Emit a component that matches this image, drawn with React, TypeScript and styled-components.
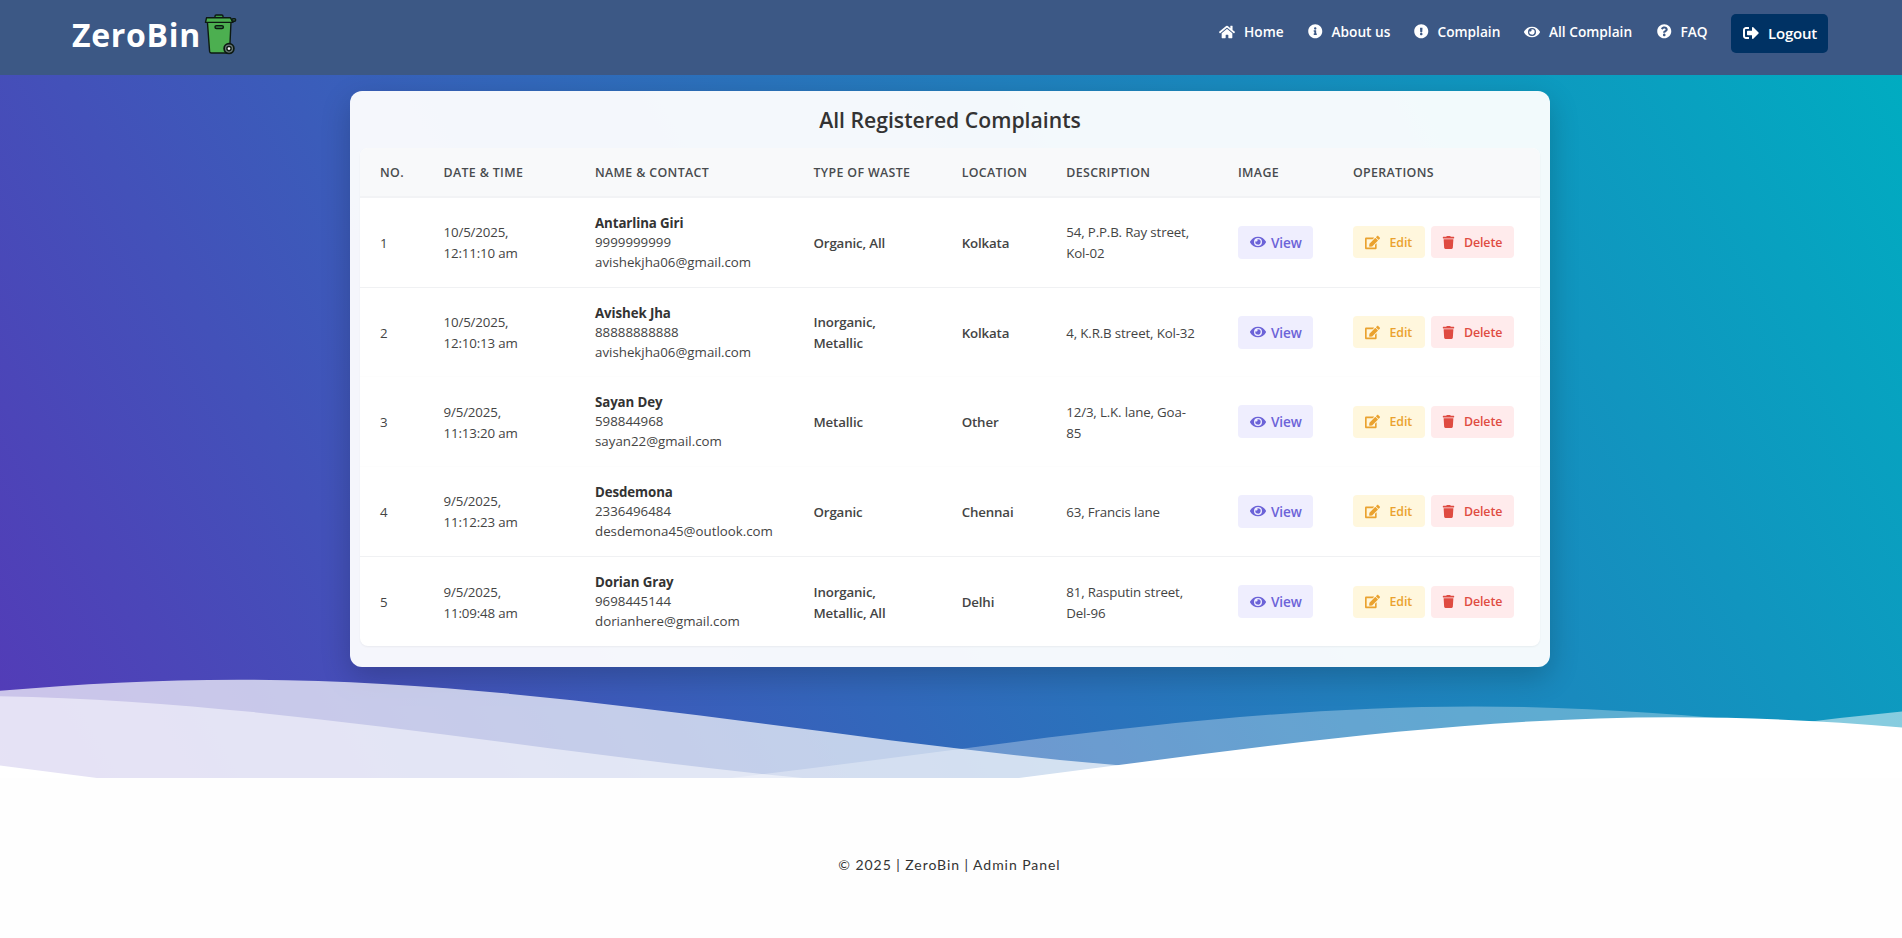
import React from "react";
import styled, { createGlobalStyle } from "styled-components";
import {
  FaHome,
  FaInfoCircle,
  FaExclamationCircle,
  FaEye,
  FaQuestionCircle,
  FaSignOutAlt,
  FaEdit,
  FaTrash,
} from "react-icons/fa";

const GlobalStyle = createGlobalStyle`
  *, *::before, *::after { box-sizing: border-box; }
  html, body { margin: 0; padding: 0; background: #fefefe; }
  body { font-family: "Segoe UI", "Open Sans", "Noto Sans", sans-serif; color: #333; overflow: hidden; }
  button { font-family: inherit; border: 0; }
`;

const Page = styled.div`
  display: flex;
  flex-direction: column;
  height: 938px;
  overflow: hidden;
`;

const NavBar = styled.header`
  display: flex;
  justify-content: space-between;
  align-items: flex-start;
  height: 75px;
  flex: none;
  padding: 0 74px 0 72px;
  background: #3c5885;
  color: #fff;
`;

const Brand = styled.div`
  display: flex;
  align-items: flex-start;
  padding-top: 13px;
  font-size: 32px;
  font-weight: 700;
  line-height: 43px;
  letter-spacing: 0.7px;
`;

const BinLogo = styled.svg`
  width: 34px;
  height: 42px;
  margin-left: 2px;
`;

const Nav = styled.nav`
  display: flex;
  align-items: flex-start;
  padding-top: 14px;
`;

const NavLink = styled.a<{ $width: number }>`
  display: flex;
  align-items: center;
  gap: 9px;
  width: ${(p) => p.$width}px;
  height: 35px;
  font-size: 13.7px;
  font-weight: 600;
  letter-spacing: 0;
  white-space: nowrap;
  svg { flex: none; }
`;

const LogoutButton = styled.button`
  display: flex;
  align-items: center;
  gap: 9px;
  width: 97px;
  height: 39px;
  padding: 0 0 2px 12px;
  border-radius: 5px;
  background: #003264;
  color: #fff;
  font-size: 15px;
  font-weight: 600;
  letter-spacing: -0.2px;
  svg { flex: none; }
`;

const Hero = styled.section`
  display: flex;
  flex-direction: column;
  align-items: center;
  flex: none;
  height: 703px;
  padding-top: 16px;
  overflow: hidden;
  background: linear-gradient(60deg, #543ab7 0%, #00acc1 100%);
`;

const Card = styled.main`
  width: 1200px;
  height: 576px;
  flex: none;
  margin-right: 2px;
  padding: 10px;
  border-radius: 12px;
  background: rgba(255, 255, 255, 0.95);
  box-shadow: 0 10px 30px rgba(0, 0, 0, 0.2);
`;

const Title = styled.h2`
  margin: 0;
  height: 47px;
  line-height: 38px;
  text-align: center;
  font-size: 21.2px;
  font-weight: 600;
  letter-spacing: 0;
  color: #333;
`;

const Table = styled.div`
  border-radius: 8px;
  overflow: hidden;
  background: #fff;
  box-shadow: 0 1px 2px rgba(0, 0, 0, 0.05);
`;

const columns = "63.5px 151.5px 218.5px 148.2px 104.6px 171.7px 115px 207px";

const HeadRow = styled.div`
  display: grid;
  grid-template-columns: ${columns};
  height: 50px;
  align-items: center;
  background: #f8f9fa;
  border-bottom: 2px solid #f2f3f5;
`;

const HeadCell = styled.div`
  padding-left: 20px;
  padding-top: 1px;
  font-size: 12.4px;
  font-weight: 600;
  letter-spacing: 0.35px;
  text-transform: uppercase;
  white-space: nowrap;
  color: #484b4e;
`;

const Row = styled.div<{ $divider: string }>`
  display: grid;
  grid-template-columns: ${columns};
  height: 89.7px;
  align-items: center;
  border-bottom: 1px solid ${(p) => p.$divider};
  &:last-child { border-bottom: 0; }
`;

const Cell = styled.div<{ $strong?: boolean }>`
  padding-left: 20px;
  padding-top: 2px;
  font-size: 13.3px;
  line-height: 21px;
  letter-spacing: -0.15px;
  font-weight: ${(p) => (p.$strong ? 600 : 400)};
  color: #444;
  white-space: nowrap;
`;

const ContactName = styled.div`
  height: 19px;
  line-height: 19px;
  font-weight: 700;
  letter-spacing: -0.1px;
  color: #333;
`;

const ContactLine = styled.div`
  height: 19.8px;
  line-height: 19.8px;
  letter-spacing: 0;
`;

const Actions = styled.div`
  display: flex;
  gap: 6px;
  padding-left: 20px;
`;

const tones = {
  view: { bg: "#efeefe", fg: "#6c63d8", width: 75, height: 33, gap: 5, inset: 12, size: 13.6 },
  edit: { bg: "#fff7dd", fg: "#eaa22f", width: 72, height: 32, gap: 9.5, inset: 12, size: 12.4 },
  remove: { bg: "#ffebec", fg: "#df4b42", width: 83, height: 32, gap: 9, inset: 11, size: 12.4 },
};

const ActionButton = styled.button<{ $tone: keyof typeof tones }>`
  display: flex;
  align-items: center;
  gap: ${(p) => tones[p.$tone].gap}px;
  width: ${(p) => tones[p.$tone].width}px;
  height: ${(p) => tones[p.$tone].height}px;
  padding: 0 0 0 ${(p) => tones[p.$tone].inset}px;
  border-radius: 4px;
  background: ${(p) => tones[p.$tone].bg};
  color: ${(p) => tones[p.$tone].fg};
  font-size: ${(p) => tones[p.$tone].size}px;
  font-weight: 600;
  letter-spacing: -0.1px;
  svg { flex: none; }
`;

const WaveBand = styled.div`
  width: 100%;
  height: 109px;
  flex: none;
  margin-top: 2px;
  overflow: hidden;
`;

const Waves = styled.svg`
  display: block;
  width: 100%;
  height: 150px;
`;

const Footer = styled.footer`
  flex: 1;
  padding: 77px 3px 0 0;
  text-align: center;
  font-family: Lato, sans-serif;
  font-size: 14px;
  line-height: 20px;
  letter-spacing: 0.95px;
  color: #333;
  background: #fefefe;
`;

const links = [
  { label: "Home", icon: FaHome, width: 89 },
  { label: "About us", icon: FaInfoCircle, width: 106 },
  { label: "Complain", icon: FaExclamationCircle, width: 110 },
  { label: "All Complain", icon: FaEye, width: 133 },
  { label: "FAQ", icon: FaQuestionCircle, width: 74 },
];

const headings = [
  "No.",
  "Date & Time",
  "Name & Contact",
  "Type of Waste",
  "Location",
  "Description",
  "Image",
  "Operations",
];

const complaints = [
  {
    date: ["10/5/2025,", "12:11:10 am"],
    name: "Antarlina Giri",
    phone: "9999999999",
    email: "avishekjha06@gmail.com",
    waste: ["Organic, All"],
    location: "Kolkata",
    description: ["54, P.P.B. Ray street,", "Kol-02"],
    divider: "#f0f1f3",
  },
  {
    date: ["10/5/2025,", "12:10:13 am"],
    name: "Avishek Jha",
    phone: "88888888888",
    email: "avishekjha06@gmail.com",
    waste: ["Inorganic,", "Metallic"],
    location: "Kolkata",
    description: ["4, K.R.B street, Kol-32"],
    divider: "#fdfdfd",
  },
  {
    date: ["9/5/2025,", "11:13:20 am"],
    name: "Sayan Dey",
    phone: "598844968",
    email: "sayan22@gmail.com",
    waste: ["Metallic"],
    location: "Other",
    description: ["12/3, L.K. lane, Goa-", "85"],
    divider: "#fdfdfd",
  },
  {
    date: ["9/5/2025,", "11:12:23 am"],
    name: "Desdemona",
    phone: "2336496484",
    email: "desdemona45@outlook.com",
    waste: ["Organic"],
    location: "Chennai",
    description: ["63, Francis lane"],
    divider: "#f0f1f3",
  },
  {
    date: ["9/5/2025,", "11:09:48 am"],
    name: "Dorian Gray",
    phone: "9698445144",
    email: "dorianhere@gmail.com",
    waste: ["Inorganic,", "Metallic, All"],
    location: "Delhi",
    description: ["81, Rasputin street,", "Del-96"],
    divider: "transparent",
  },
];

function Lines({ text }: { text: string[] }) {
  return (
    <>
      {text.map((line) => (
        <div key={line}>{line}</div>
      ))}
    </>
  );
}

function Bin() {
  return (
    <BinLogo viewBox="0 0 34 42" fill="none" stroke="#0d1a12" strokeWidth="1.4">
      <path d="M12 5V3.2Q12 2 13.2 2H18.8Q20 2 20 3.2V5" fill="#3c9e47" />
      <path d="M4.4 9H28L26.6 38.4Q26.5 40 25 40H8.4Q6.8 40 6.6 38.4Z" fill="#4caf50" />
      <path d="M3.5 4.8H27.5L30 9.4H2.5Z" fill="#4caf50" strokeLinejoin="round" />
      <rect x="29" y="5.6" width="3.6" height="2.6" rx="1" fill="#33554a" />
      <rect x="12" y="12.6" width="8.4" height="3" rx="1.5" fill="#2c7a3a" />
      <circle cx="26" cy="35.6" r="4.9" fill="#6a7877" strokeWidth="1.7" />
      <circle cx="26" cy="35.6" r="2.1" fill="#fff" />
    </BinLogo>
  );
}

export default function App() {
  return (
    <>
      <GlobalStyle />
      <Page>
        <NavBar>
          <Brand>
            ZeroBin
            <Bin />
          </Brand>
          <Nav>
            {links.map(({ label, icon: Icon, width }) => (
              <NavLink key={label} $width={width}>
                <Icon size={label === "Home" || label === "All Complain" ? 16 : 14.5} />
                {label}
              </NavLink>
            ))}
            <LogoutButton>
              <FaSignOutAlt size={16} />
              Logout
            </LogoutButton>
          </Nav>
        </NavBar>
        <Hero>
          <Card>
            <Title>All Registered Complaints</Title>
            <Table>
              <HeadRow>
                {headings.map((h) => (
                  <HeadCell key={h}>{h}</HeadCell>
                ))}
              </HeadRow>
              {complaints.map((c, i) => (
                <Row key={c.name} $divider={c.divider}>
                  <Cell>{i + 1}</Cell>
                  <Cell>
                    <Lines text={c.date} />
                  </Cell>
                  <Cell>
                    <ContactName>{c.name}</ContactName>
                    <ContactLine>{c.phone}</ContactLine>
                    <ContactLine>{c.email}</ContactLine>
                  </Cell>
                  <Cell $strong>
                    <Lines text={c.waste} />
                  </Cell>
                  <Cell $strong>{c.location}</Cell>
                  <Cell>
                    <Lines text={c.description} />
                  </Cell>
                  <Actions>
                    <ActionButton $tone="view">
                      <FaEye size={16} />
                      View
                    </ActionButton>
                  </Actions>
                  <Actions>
                    <ActionButton $tone="edit">
                      <FaEdit size={15} />
                      Edit
                    </ActionButton>
                    <ActionButton $tone="remove">
                      <FaTrash size={13} />
                      Delete
                    </ActionButton>
                  </Actions>
                </Row>
              ))}
            </Table>
          </Card>
          <WaveBand>
            <Waves viewBox="0 24 150 28" preserveAspectRatio="none">
              <defs>
                <path
                  id="wave"
                  d="M-160 44c30 0 58-18 88-18s58 18 88 18 58-18 88-18 58 18 88 18v44h-352z"
                />
              </defs>
              <use href="#wave" x="90.8" y="0" fill="rgba(255,255,255,0.7)" />
              <use href="#wave" x="68.8" y="3" fill="rgba(255,255,255,0.5)" />
              <use href="#wave" x="12.2" y="5" fill="rgba(255,255,255,0.3)" />
              <use href="#wave" x="28" y="7" fill="#fff" />
            </Waves>
          </WaveBand>
        </Hero>
        <Footer>© 2025 | ZeroBin | Admin Panel</Footer>
      </Page>
    </>
  );
}
